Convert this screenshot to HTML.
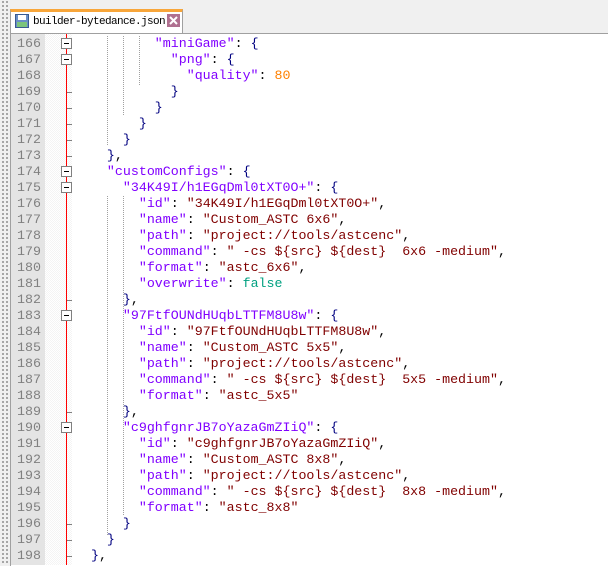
<!DOCTYPE html>
<html><head><style>
body{margin:0;width:608px;height:565px;overflow:hidden;background:#f0f0f0;font-family:"Liberation Mono",monospace;position:relative}
.strip{position:absolute;left:1px;top:0;width:8px;height:565px;background:radial-gradient(circle,#a0a0a0 0 1px,transparent 1.2px) 0 0/4px 4px}
.tab{position:absolute;left:10px;top:9px;width:173px;height:24px;background:#fff;border:1px solid #a0a0a0;border-bottom:none;border-top:3px solid #f8a63a;box-sizing:border-box}
.tab span{position:absolute;left:22px;top:4px;font-size:11px;letter-spacing:-0.6px;white-space:nowrap;color:#000}
.ed{position:absolute;left:10px;top:33px;width:598px;height:532px;background:#fff;border-top:1px solid #a0a0a0;border-left:1px solid #a0a0a0}
.gut{position:absolute;left:11px;top:34px;width:34px;height:531px;background:#e4e4e4}
.fold{position:absolute;left:45px;top:34px;width:27px;height:531px;background:repeating-conic-gradient(#f4f4f4 0 25%,#fff 0 50%) 0 0/2px 2px}
.red{position:absolute;left:66px;top:34px;width:1px;height:531px;background:#ff0000}
.box{position:absolute;left:61px;width:11px;height:11px;border:1px solid #808080;background:#fff;box-sizing:border-box}
.box::after{content:"";position:absolute;left:2px;top:4px;width:5px;height:1px;background:#000}
.tick{position:absolute;left:67px;width:5px;height:1px;background:#808080}
.ln{position:absolute;left:11px;width:30px;text-align:right;font-size:13.3px;color:#808080;line-height:16px}
.tx{position:absolute;left:75px;font-size:13.3px;line-height:16px;white-space:pre;color:#000}
.g{position:absolute;width:1px;background:repeating-linear-gradient(#a0a0a0 0 1px,transparent 1px 2px)}
.k{color:#8000ff}.s{color:#800000}.n{color:#ff8000}.f{color:#00a080}.p{color:#000080}
</style></head><body>
<div class="strip"></div>
<div class="tab"><svg style="position:absolute;left:4px;top:2px" width="14" height="14"><rect x="0.5" y="0.5" width="13" height="13" fill="#6a8fc8" stroke="#3a5a90"/><rect x="3" y="1" width="8" height="5" fill="#fff"/><rect x="2" y="8" width="10" height="5" fill="#7cc47c"/></svg><span>builder-bytedance.json</span><svg style="position:absolute;left:156px;top:2px" width="13" height="13"><rect width="13" height="13" fill="#b07090"/><path d="M3 3L10 10M10 3L3 10" stroke="#fff" stroke-width="2"/></svg></div>
<div class="ed"></div>
<div class="gut"></div>
<div class="fold"></div>
<div class="g" style="left:107px;top:36px;height:110px"></div>
<div class="g" style="left:123px;top:36px;height:80px"></div>
<div class="g" style="left:139px;top:36px;height:50px"></div>
<div class="g" style="left:107px;top:196px;height:340px"></div>
<div class="g" style="left:123px;top:196px;height:320px"></div>
<div id="c"></div>
<div class="red"></div>
<div id="b"></div>
<script>
const L=[
[10,'<span class="k">"miniGame"</span>: <span class="p">{</span>',1],
[12,'<span class="k">"png"</span>: <span class="p">{</span>',1],
[14,'<span class="k">"quality"</span>: <span class="n">80</span>'],
[12,'<span class="p">}</span>',2],
[10,'<span class="p">}</span>',2],
[8,'<span class="p">}</span>',2],
[6,'<span class="p">}</span>',2],
[4,'<span class="p">}</span>,',2],
[4,'<span class="k">"customConfigs"</span>: <span class="p">{</span>',1],
[6,'<span class="k">"34K49I/h1EGqDml0tXT0O+"</span>: <span class="p">{</span>',1],
[8,'<span class="k">"id"</span>: <span class="s">"34K49I/h1EGqDml0tXT0O+"</span>,'],
[8,'<span class="k">"name"</span>: <span class="s">"Custom_ASTC 6x6"</span>,'],
[8,'<span class="k">"path"</span>: <span class="s">"project://tools/astcenc"</span>,'],
[8,'<span class="k">"command"</span>: <span class="s">" -cs ${src} ${dest}  6x6 -medium"</span>,'],
[8,'<span class="k">"format"</span>: <span class="s">"astc_6x6"</span>,'],
[8,'<span class="k">"overwrite"</span>: <span class="f">false</span>'],
[6,'<span class="p">}</span>,',2],
[6,'<span class="k">"97FtfOUNdHUqbLTTFM8U8w"</span>: <span class="p">{</span>',1],
[8,'<span class="k">"id"</span>: <span class="s">"97FtfOUNdHUqbLTTFM8U8w"</span>,'],
[8,'<span class="k">"name"</span>: <span class="s">"Custom_ASTC 5x5"</span>,'],
[8,'<span class="k">"path"</span>: <span class="s">"project://tools/astcenc"</span>,'],
[8,'<span class="k">"command"</span>: <span class="s">" -cs ${src} ${dest}  5x5 -medium"</span>,'],
[8,'<span class="k">"format"</span>: <span class="s">"astc_5x5"</span>'],
[6,'<span class="p">}</span>,',2],
[6,'<span class="k">"c9ghfgnrJB7oYazaGmZIiQ"</span>: <span class="p">{</span>',1],
[8,'<span class="k">"id"</span>: <span class="s">"c9ghfgnrJB7oYazaGmZIiQ"</span>,'],
[8,'<span class="k">"name"</span>: <span class="s">"Custom_ASTC 8x8"</span>,'],
[8,'<span class="k">"path"</span>: <span class="s">"project://tools/astcenc"</span>,'],
[8,'<span class="k">"command"</span>: <span class="s">" -cs ${src} ${dest}  8x8 -medium"</span>,'],
[8,'<span class="k">"format"</span>: <span class="s">"astc_8x8"</span>'],
[6,'<span class="p">}</span>',2],
[4,'<span class="p">}</span>',2],
[2,'<span class="p">}</span>,',2]];
let h='',b='';
L.forEach((l,i)=>{const y=36+i*16;
h+=`<div class="ln" style="top:${y}px">${166+i}</div><div class="tx" style="top:${y}px">${' '.repeat(l[0])}${l[1]}</div>`;
if(l[2]==1)b+=`<div class="box" style="top:${y+2}px"></div>`;
if(l[2]==2)b+=`<div class="tick" style="top:${y+8}px"></div>`;});
document.getElementById('c').innerHTML=h;
document.getElementById('b').innerHTML=b;
</script>
</body></html>
